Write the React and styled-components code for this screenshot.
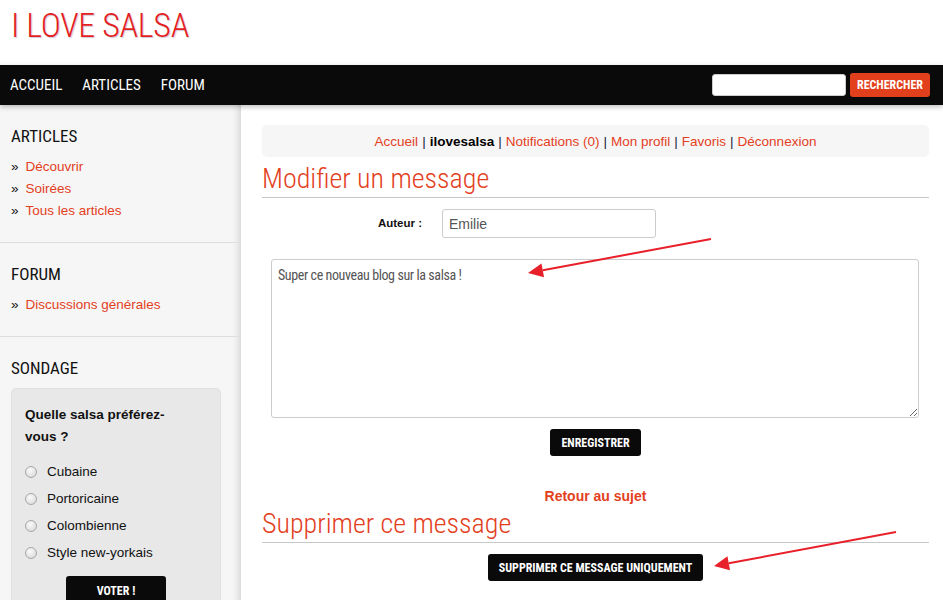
import React from "react";
import styled, { createGlobalStyle } from "styled-components";

const GlobalStyle = createGlobalStyle`
  html, body {
    margin: 0;
    padding: 0;
    background: #fff;
    font-family: "Liberation Sans", Arial, sans-serif;
  }
  * {
    box-sizing: border-box;
  }
`;

const RED = "#e3401d";
const NARROW = `"Roboto Condensed", "DejaVu Sans Condensed", sans-serif`;

const Page = styled.div`
  position: relative;
  width: 943px;
  min-height: 600px;
`;

const Header = styled.header`
  height: 65px;
  padding: 6px 11px 0;
`;

const Logo = styled.h1`
  margin: 0;
  font: 300 34px/38px ${NARROW};
  letter-spacing: -0.3px;
  color: #e51f1f;
  text-shadow: 1px 1px 1px rgba(90, 70, 120, 0.3);
`;

const NavBar = styled.nav`
  height: 40px;
  background: #0a0a0a;
  display: flex;
  align-items: center;
  justify-content: space-between;
  padding: 0 13px 0 10px;
  box-shadow: 0 2px 5px rgba(0, 0, 0, 0.25);
  position: relative;
  z-index: 2;
`;

const NavLinks = styled.div`
  display: flex;
  gap: 20px;

  a {
    font: normal 15px/1 ${NARROW};
    color: #fff;
    text-decoration: none;
  }
`;

const Search = styled.form`
  display: flex;
  align-items: center;
  gap: 4px;
`;

const SearchInput = styled.input`
  width: 134px;
  height: 22px;
  border: 1px solid #ccc;
  border-radius: 3px;
  background: #fff;
`;

const Button = styled.button`
  border: 0;
  border-radius: 3px;
  background: ${({ $red }) => ($red ? "#e2401d" : "#0a0a0a")};
  color: #fff;
  font: bold 12px/1 ${NARROW};
  height: ${({ $h }) => $h || 27}px;
  padding: 0 ${({ $px }) => $px || 11}px;
  cursor: pointer;
`;

const Layout = styled.div`
  display: grid;
  grid-template-columns: 241px 1fr;
`;

const Sidebar = styled.aside`
  background: #f6f6f6;
  box-shadow: inset -9px 0 8px -8px rgba(0, 0, 0, 0.18);
  min-height: 495px;
`;

const Section = styled.section`
  padding: 19px 20px 20px 11px;
  border-bottom: ${({ $last }) => ($last ? "none" : "1px solid #dedede")};
`;

const SideTitle = styled.h2`
  margin: 0 0 8px;
  font: normal 17px/24px ${NARROW};
  color: #111;
`;

const SideList = styled.ul`
  margin: 0;
  padding: 0;
  list-style: none;

  li {
    font-size: 13.5px;
    line-height: 22px;
    display: flex;
    gap: 7px;
  }
  li::before {
    content: "»";
    color: #111;
  }
  a {
    color: ${RED};
    text-decoration: none;
  }
`;

const Poll = styled.div`
  background: #e8e8e8;
  border-radius: 5px;
  border: 1px solid #e0e0e0;
  padding: 15px 13px 0;
  height: 220px;
`;

const Question = styled.p`
  margin: 0 0 10px;
  max-width: 160px;
  font: bold 13.5px/22px "Liberation Sans", Arial, sans-serif;
  color: #111;
`;

const Option = styled.label`
  display: flex;
  align-items: center;
  gap: 10px;
  height: 27px;
  font-size: 13.5px;
  color: #111;
`;

const Radio = styled.input.attrs({ type: "radio" })`
  appearance: none;
  margin: 0;
  width: 12px;
  height: 12px;
  border-radius: 50%;
  border: 1px solid #a8a8a8;
  background: radial-gradient(circle at 40% 35%, #fafafa, #d4d4d4);
`;

const Centered = styled.div`
  display: flex;
  justify-content: center;
  margin-top: ${({ $mt }) => $mt || 0}px;
`;

const Main = styled.main`
  padding: 20px 14px 0 21px;
`;

const Crumbs = styled.div`
  height: 32px;
  background: #f6f6f6;
  border-radius: 5px;
  display: flex;
  align-items: center;
  justify-content: center;
  gap: 4px;
  font-size: 13.5px;
  color: #1a1a40;

  a {
    color: ${RED};
    text-decoration: none;
  }
  b {
    color: #000;
  }
`;

const Title = styled.h2`
  margin: ${({ $mt }) => $mt || 0}px 0 0;
  font: 300 28px/36px ${NARROW};
  color: ${RED};
  border-bottom: 1px solid #c8c8c8;
`;

const FieldRow = styled.div`
  display: grid;
  grid-template-columns: 160px 214px;
  column-gap: 20px;
  align-items: center;
  margin-top: 11px;
`;

const Label = styled.label`
  text-align: right;
  font: bold 11.5px/1 "Liberation Sans", Arial, sans-serif;
  color: #111;
`;

const TextInput = styled.input`
  height: 29px;
  border: 1px solid #ccc;
  border-radius: 3px;
  padding: 0 6px;
  font: 14px "Liberation Sans", Arial, sans-serif;
  color: #555;
`;

const TextArea = styled.textarea`
  display: block;
  width: 648px;
  height: 159px;
  margin: 21px 0 0 9px;
  border: 1px solid #ccc;
  border-radius: 3px;
  padding: 6px 6px;
  font: 14px/1.3 ${NARROW};
  letter-spacing: -0.4px;
  color: #555;
`;

const BackLink = styled.a`
  display: block;
  text-align: center;
  margin-top: 32px;
  font: bold 14px/16px "Liberation Sans", Arial, sans-serif;
  color: ${RED};
  text-decoration: none;
`;

const Arrows = styled.svg`
  position: absolute;
  top: 0;
  left: 0;
  width: 943px;
  height: 600px;
  pointer-events: none;
`;

const Arrow = ({ x1, y1, x2, y2 }) => {
  const ang = Math.atan2(y2 - y1, x2 - x1);
  const len = 15;
  const half = 7;
  const bx = x2 - len * Math.cos(ang);
  const by = y2 - len * Math.sin(ang);
  const px = -Math.sin(ang) * half;
  const py = Math.cos(ang) * half;
  return (
    <g>
      <line x1={x1} y1={y1} x2={bx} y2={by} stroke="#e8202a" strokeWidth="2" />
      <polygon
        points={`${x2},${y2} ${bx + px},${by + py} ${bx - px},${by - py}`}
        fill="#e8202a"
      />
    </g>
  );
};

const options = ["Cubaine", "Portoricaine", "Colombienne", "Style new-yorkais"];

export default function App() {
  return (
    <Page>
      <GlobalStyle />
      <Header>
        <Logo>I LOVE SALSA</Logo>
      </Header>
      <NavBar>
        <NavLinks>
          <a href="#">ACCUEIL</a>
          <a href="#">ARTICLES</a>
          <a href="#">FORUM</a>
        </NavLinks>
        <Search onSubmit={(e) => e.preventDefault()}>
          <SearchInput type="text" />
          <Button $red $h={24} $px={7}>RECHERCHER</Button>
        </Search>
      </NavBar>
      <Layout>
        <Sidebar>
          <Section>
            <SideTitle>ARTICLES</SideTitle>
            <SideList>
              <li><a href="#">Découvrir</a></li>
              <li><a href="#">Soirées</a></li>
              <li><a href="#">Tous les articles</a></li>
            </SideList>
          </Section>
          <Section>
            <SideTitle>FORUM</SideTitle>
            <SideList>
              <li><a href="#">Discussions générales</a></li>
            </SideList>
          </Section>
          <Section $last>
            <SideTitle>SONDAGE</SideTitle>
            <Poll>
              <Question>Quelle salsa préférez-vous ?</Question>
              {options.map((o) => (
                <Option key={o}>
                  <Radio name="salsa" />
                  {o}
                </Option>
              ))}
              <Centered $mt={10}>
                <Button $px={31} $h={30}>VOTER !</Button>
              </Centered>
            </Poll>
          </Section>
        </Sidebar>
        <Main>
          <Crumbs>
            <a href="#">Accueil</a> | <b>ilovesalsa</b> | <a href="#">Notifications (0)</a> |{" "}
            <a href="#">Mon profil</a> | <a href="#">Favoris</a> | <a href="#">Déconnexion</a>
          </Crumbs>
          <Title $mt={4}>Modifier un message</Title>
          <FieldRow>
            <Label>Auteur :</Label>
            <TextInput defaultValue="Emilie" />
          </FieldRow>
          <TextArea defaultValue="Super ce nouveau blog sur la salsa !" />
          <Centered $mt={11}>
            <Button>ENREGISTRER</Button>
          </Centered>
          <BackLink href="#">Retour au sujet</BackLink>
          <Title $mt={2}>Supprimer ce message</Title>
          <Centered $mt={11}>
            <Button>SUPPRIMER CE MESSAGE UNIQUEMENT</Button>
          </Centered>
        </Main>
      </Layout>
      <Arrows viewBox="0 0 943 600">
        <Arrow x1={711} y1={239} x2={528} y2={273} />
        <Arrow x1={896} y1={532} x2={714} y2={566} />
      </Arrows>
    </Page>
  );
}
